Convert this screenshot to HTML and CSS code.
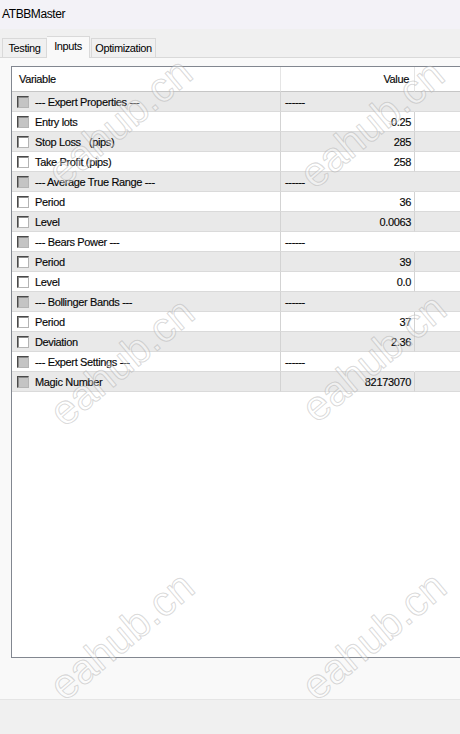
FILE: index.html
```html
<!DOCTYPE html>
<html lang="en">
<head>
    <meta charset="UTF-8">
    <meta name="viewport" content="width=device-width, initial-scale=1.0">
    <title>ATBBMaster</title>
    <link rel="stylesheet" href="styles.css">
</head>
<body>
    <div class="window">
        <div class="titlebar">ATBBMaster</div>

        <div class="tabs">
            <div class="tab tab-testing">Testing</div>
            <div class="tab tab-inputs active">Inputs</div>
            <div class="tab tab-optimization">Optimization</div>
        </div>

        <div class="panel">
            <div class="grid">
                <table class="inputs">
                    <thead>
                        <tr>
                            <th class="col-name">Variable</th>
                            <th class="col-value">Value</th>
                            <th class="col-rest"></th>
                        </tr>
                    </thead>
                    <tbody>
                        <tr class="group">
                            <td class="col-name"><span class="check off"></span>--- Expert Properties ---</td>
                            <td class="col-value">------</td>
                            <td class="col-rest"></td>
                        </tr>
                        <tr>
                            <td class="col-name"><span class="check off"></span>Entry lots</td>
                            <td class="col-value">0.25</td>
                            <td class="col-rest"></td>
                        </tr>
                        <tr>
                            <td class="col-name"><span class="check"></span>Stop Loss   (pips)</td>
                            <td class="col-value">285</td>
                            <td class="col-rest"></td>
                        </tr>
                        <tr>
                            <td class="col-name"><span class="check"></span>Take Profit (pips)</td>
                            <td class="col-value">258</td>
                            <td class="col-rest"></td>
                        </tr>
                        <tr class="group">
                            <td class="col-name"><span class="check off"></span>--- Average True Range ---</td>
                            <td class="col-value">------</td>
                            <td class="col-rest"></td>
                        </tr>
                        <tr>
                            <td class="col-name"><span class="check"></span>Period</td>
                            <td class="col-value">36</td>
                            <td class="col-rest"></td>
                        </tr>
                        <tr>
                            <td class="col-name"><span class="check"></span>Level</td>
                            <td class="col-value">0.0063</td>
                            <td class="col-rest"></td>
                        </tr>
                        <tr class="group">
                            <td class="col-name"><span class="check off"></span>--- Bears Power ---</td>
                            <td class="col-value">------</td>
                            <td class="col-rest"></td>
                        </tr>
                        <tr>
                            <td class="col-name"><span class="check"></span>Period</td>
                            <td class="col-value">39</td>
                            <td class="col-rest"></td>
                        </tr>
                        <tr>
                            <td class="col-name"><span class="check"></span>Level</td>
                            <td class="col-value">0.0</td>
                            <td class="col-rest"></td>
                        </tr>
                        <tr class="group">
                            <td class="col-name"><span class="check off"></span>--- Bollinger Bands ---</td>
                            <td class="col-value">------</td>
                            <td class="col-rest"></td>
                        </tr>
                        <tr>
                            <td class="col-name"><span class="check"></span>Period</td>
                            <td class="col-value">37</td>
                            <td class="col-rest"></td>
                        </tr>
                        <tr>
                            <td class="col-name"><span class="check"></span>Deviation</td>
                            <td class="col-value">2.36</td>
                            <td class="col-rest"></td>
                        </tr>
                        <tr class="group">
                            <td class="col-name"><span class="check off"></span>--- Expert Settings ---</td>
                            <td class="col-value">------</td>
                            <td class="col-rest"></td>
                        </tr>
                        <tr>
                            <td class="col-name"><span class="check off"></span>Magic Number</td>
                            <td class="col-value">82173070</td>
                            <td class="col-rest"></td>
                        </tr>
                    </tbody>
                </table>
            </div>
        </div>

        <div class="statusbar"></div>
    </div>

    <!-- site watermark laid over the window -->
    <div class="watermarks">
        <span class="mark mark-1">eahub.cn</span>
        <span class="mark mark-2">eahub.cn</span>
        <span class="mark mark-3">eahub.cn</span>
        <span class="mark mark-4">eahub.cn</span>
        <span class="mark mark-5">eahub.cn</span>
        <span class="mark mark-6">eahub.cn</span>
    </div>
</body>
</html>
```

FILE: styles.css
```css
body {
    margin: 0;
    width: 460px;
    height: 734px;
    overflow: hidden;
    position: relative;
    font-family: "Liberation Sans", Arial, sans-serif;
    color: #000000;
    background-color: #f9f9f9;
}
.window {
    display: flex;
    flex-direction: column;
    height: 100%;
}
.titlebar {
    height: 29px;
    line-height: 29px;
    padding-left: 2px;
    font-size: 12px;
    letter-spacing: -0.4px;
    background-color: #f3f2f7;
}
.tabs {
    height: 28px;
    display: flex;
    align-items: flex-end;
    padding-left: 2px;
    background-color: #f0f0f0;
    border-bottom: 1px solid #d9d9d9;
}
.tab {
    height: 18px;
    line-height: 18px;
    font-size: 11px;
    letter-spacing: -0.4px;
    text-align: center;
    border: 1px solid #d9d9d9;
    border-bottom: none;
    background-color: #f0f0f0;
    box-sizing: content-box;
}
.tab-testing {
    width: 43px;
}
.tab-inputs {
    width: 42px;
}
.tab-optimization {
    width: 63px;
    margin-left: 1px;
}
.tab.active {
    height: 21px;
    line-height: 19px;
    margin-bottom: -1px;
    margin-left: 0;
    background-color: #f9f9f9;
    border-left: none;
}
.panel {
    flex: 1;
    padding: 8px 0 0 11px;
    overflow: hidden;
}
.grid {
    width: 470px;
    height: 592px;
    box-sizing: border-box;
    border: 1px solid #828790;
    border-right: none;
    background-color: #ffffff;
}
.statusbar {
    height: 34px;
    border-top: 1px solid #e5e5e5;
    background-color: #f0f0f0;
}

/* inputs list */
.inputs {
    border-collapse: separate;
    border-spacing: 0;
    table-layout: fixed;
    width: 100%;
    font-size: 11px;
    letter-spacing: -0.35px;
    color: #0a0a0a;
    -webkit-text-stroke: 0.15px #000000;
}
.inputs .col-name {
    width: 268px;
}
.inputs .col-value {
    width: 133px;
}
.inputs th {
    height: 24px;
    padding: 0;
    font-weight: normal;
    border-bottom: 1px solid #c6c6c6;
}
.inputs th.col-name {
    text-align: left;
    padding-left: 7px;
    width: 261px;
    border-right: 1px solid #e5e5e5;
}
.inputs th.col-value {
    text-align: right;
    padding-right: 5px;
    width: 128px;
    border-right: 1px solid #e5e5e5;
}
.inputs td {
    height: 19px;
    padding: 0;
    white-space: pre;
    border-bottom: 1px solid #dadada;
}
.inputs tbody tr:nth-child(odd) td {
    background-color: #e9e9e9;
}
.inputs td.col-name {
    border-right: 1px solid #d3d3d3;
}
.inputs td.col-value {
    text-align: right;
    padding-right: 3px;
    width: 130px;
    border-right: 1px solid #d3d3d3;
}
.inputs tr.group td.col-value {
    text-align: left;
    padding-left: 4px;
    width: 129px;
    padding-right: 0;
    border-right-color: transparent;
}
.check {
    display: inline-block;
    width: 10px;
    height: 10px;
    margin: 0 6px 0 5px;
    vertical-align: -2px;
    background-color: #ffffff;
    border: 1px solid;
    border-color: #4a4a4a #b4b4b4 #b4b4b4 #4a4a4a;
    box-shadow: inset 1px 1px 0 #8a8a8a;
}
.check.off {
    background-color: #c4c4c4;
}

/* watermark */
.watermarks {
    position: absolute;
    top: 0;
    left: 0;
    width: 460px;
    height: 734px;
    pointer-events: none;
}
.mark {
    position: absolute;
    font-size: 42px;
    letter-spacing: 0;
    white-space: nowrap;
    color: rgba(255, 255, 255, 0.35);
    -webkit-text-stroke: 1px rgba(160, 160, 160, 0.4);
    transform: translate(-50%, -50%) rotate(-40deg);
}
.mark-1 { left: 120px; top: 122px; }
.mark-2 { left: 372px; top: 124px; }
.mark-3 { left: 122px; top: 362px; }
.mark-4 { left: 374px; top: 358px; }
.mark-5 { left: 122px; top: 636px; }
.mark-6 { left: 374px; top: 636px; }
```
